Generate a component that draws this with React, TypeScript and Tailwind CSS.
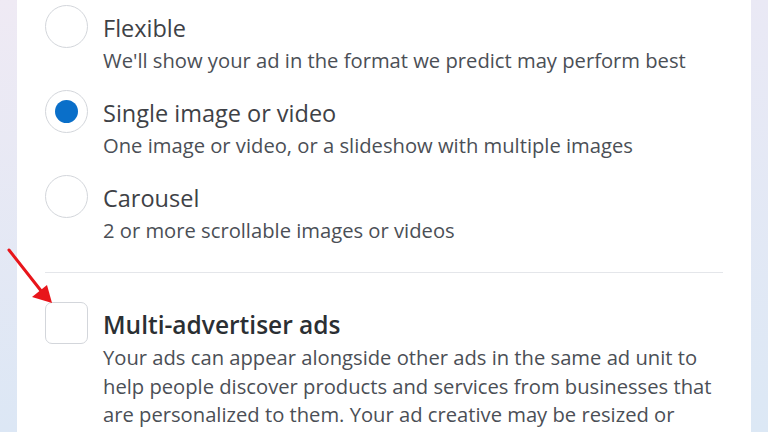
import React from 'react';

interface FormatOption {
  title: string;
  desc: string;
  selected: boolean;
}

const options: FormatOption[] = [
  { title: 'Flexible', desc: "We'll show your ad in the format we predict may perform best", selected: false },
  { title: 'Single image or video', desc: 'One image or video, or a slideshow with multiple images', selected: true },
  { title: 'Carousel', desc: '2 or more scrollable images or videos', selected: false },
];

const Radio: React.FC<{ checked: boolean }> = ({ checked }) => (
  <div className="w-[43px] h-[43px] shrink-0 rounded-full border-[1.5px] border-[#d3d6db] bg-white flex items-center justify-center">
    {checked && <div className="w-[23px] h-[23px] rounded-full bg-[#0a6fc9]" />}
  </div>
);

export default function App() {
  return (
    <div className="w-[768px] h-[432px] overflow-hidden flex font-['Open_Sans',sans-serif]">
      <div className="w-[17px] shrink-0 bg-gradient-to-b from-[#efeaf4] to-[#dce7f5]" />

      <div className="relative flex-1 bg-white pl-[28px] pr-[28px] pt-[5px]">
        {/* Ad format radios */}
        <div className="flex flex-col">
          {options.map((opt) => (
            <div key={opt.title} className="h-[85px] flex items-start gap-[15px]">
              <Radio checked={opt.selected} />
              <div className="mt-[8px]">
                <div className="text-[23.5px] leading-[30px] text-[#3e4146]">{opt.title}</div>
                <div className="mt-[3px] text-[20.2px] leading-[28px] text-[#4b4f56] whitespace-nowrap">{opt.desc}</div>
              </div>
            </div>
          ))}
        </div>

        <div className="mt-[12px] h-px bg-[#e4e6ea]" />

        {/* Multi-advertiser */}
        <div className="mt-[29px] flex items-start gap-[15px]">
          <div className="w-[43px] h-[42px] shrink-0 rounded-[7px] border-[1.5px] border-[#d3d6db] bg-white" />
          <div className="mt-[8px]">
            <div className="text-[24.5px] leading-[30px] font-semibold text-[#2b2f33]">Multi-advertiser ads</div>
            <div className="mt-[3px] text-[20.2px] leading-[28.5px] text-[#4b4f56] w-[618px]">
              Your ads can appear alongside other ads in the same ad unit to help people discover products and services from businesses that are personalized to them. Your ad creative may be resized or cropped to fit the ad unit.
            </div>
          </div>
        </div>

        {/* annotation arrow */}
        <svg className="absolute left-[-17px] top-0" width="80" height="432" viewBox="0 0 80 432">
          <line x1="9" y1="250" x2="42" y2="292" stroke="#e8151b" strokeWidth="3" strokeLinecap="round" />
          <polygon points="52,303 32,297 47,285" fill="#e8151b" />
        </svg>
      </div>

      <div className="w-[17px] shrink-0 bg-gradient-to-b from-[#eae9f5] to-[#dce8f5]" />
    </div>
  );
}
